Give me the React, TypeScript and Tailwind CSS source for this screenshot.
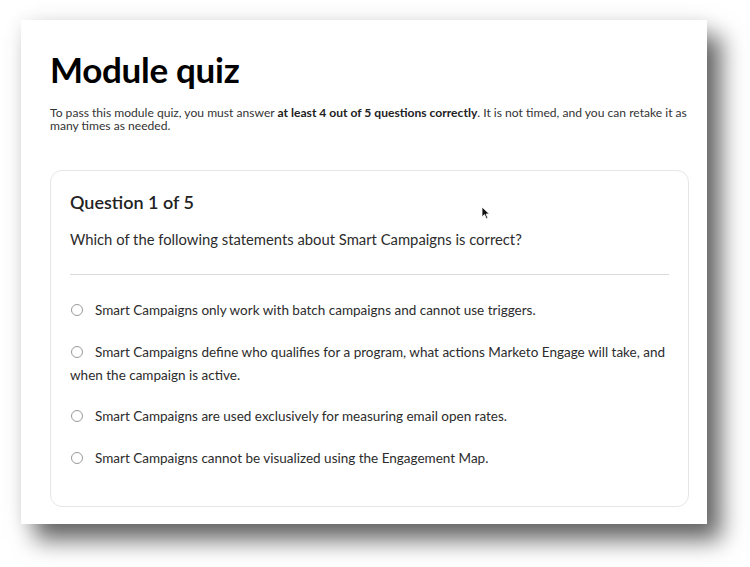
import React from 'react';

const options = [
    'Smart Campaigns only work with batch campaigns and cannot use triggers.',
    'Smart Campaigns define who qualifies for a program, what actions Marketo Engage will take, and when the campaign is active.',
    'Smart Campaigns are used exclusively for measuring email open rates.',
    'Smart Campaigns cannot be visualized using the Engagement Map.',
];

const App = () => {
    return (
        <div
            className="w-[750px] h-[567px] bg-white overflow-hidden pl-[21px] pt-[20px]"
            style={{ fontFamily: 'Lato, "Noto Sans", sans-serif' }}
        >
            {/* Quiz page panel */}
            <div className="relative w-[686px] h-[504px] bg-white pl-[29px] pr-[18px] pt-[27px] shadow-[14px_16px_22px_rgba(0,0,0,0.6),0_0_18px_rgba(0,0,0,0.08)]">
                <h1 className="text-[35px] leading-[44px] font-bold text-black tracking-[-0.3px]">Module quiz</h1>
                <p className="mt-[15px] text-[12.1px] leading-[13px] text-[#333]">
                    To pass this module quiz, you must answer <span className="font-bold text-[#222]">at least 4 out of 5 questions correctly</span>. It is not timed, and you can retake it as many times as needed.
                </p>

                {/* Question card */}
                <div className="mt-[38px] h-[337px] rounded-[12px] border border-[#e6e6e6] px-[19px] pt-[18px]">
                    <h2 className="text-[18px] leading-[26px] font-semibold text-[#222]">Question 1 of 5</h2>
                    <p className="mt-[13px] text-[14.8px] leading-[22px] text-[#2c2c2c]">
                        Which of the following statements about Smart Campaigns is correct?
                    </p>
                    <div className="mt-[24px] border-t border-[#d9d9d9]" />
                    <div className="mt-[24px] flex flex-col gap-[18.5px]">
                        {options.map((o) => (
                            <label key={o} className="block text-[13.5px] leading-[23px] text-[#2c2c2c]">
                                <span className="inline-block align-[-1px] w-[12px] h-[12px] ml-[1px] mr-[12px] rounded-full border border-[#9a9a9a] bg-white" />
                                {o}
                            </label>
                        ))}
                    </div>
                </div>

                {/* Mouse pointer */}
                <svg className="absolute left-[460px] top-[186px]" width="9" height="14" viewBox="0 0 9 14">
                    <path d="M1 1 L1 11 L3.5 8.6 L5.4 12.8 L6.9 12.1 L5.1 8 L8.4 8 Z" fill="#111" stroke="#fff" strokeWidth="0.8" />
                </svg>
            </div>
        </div>
    );
};

export default App;
